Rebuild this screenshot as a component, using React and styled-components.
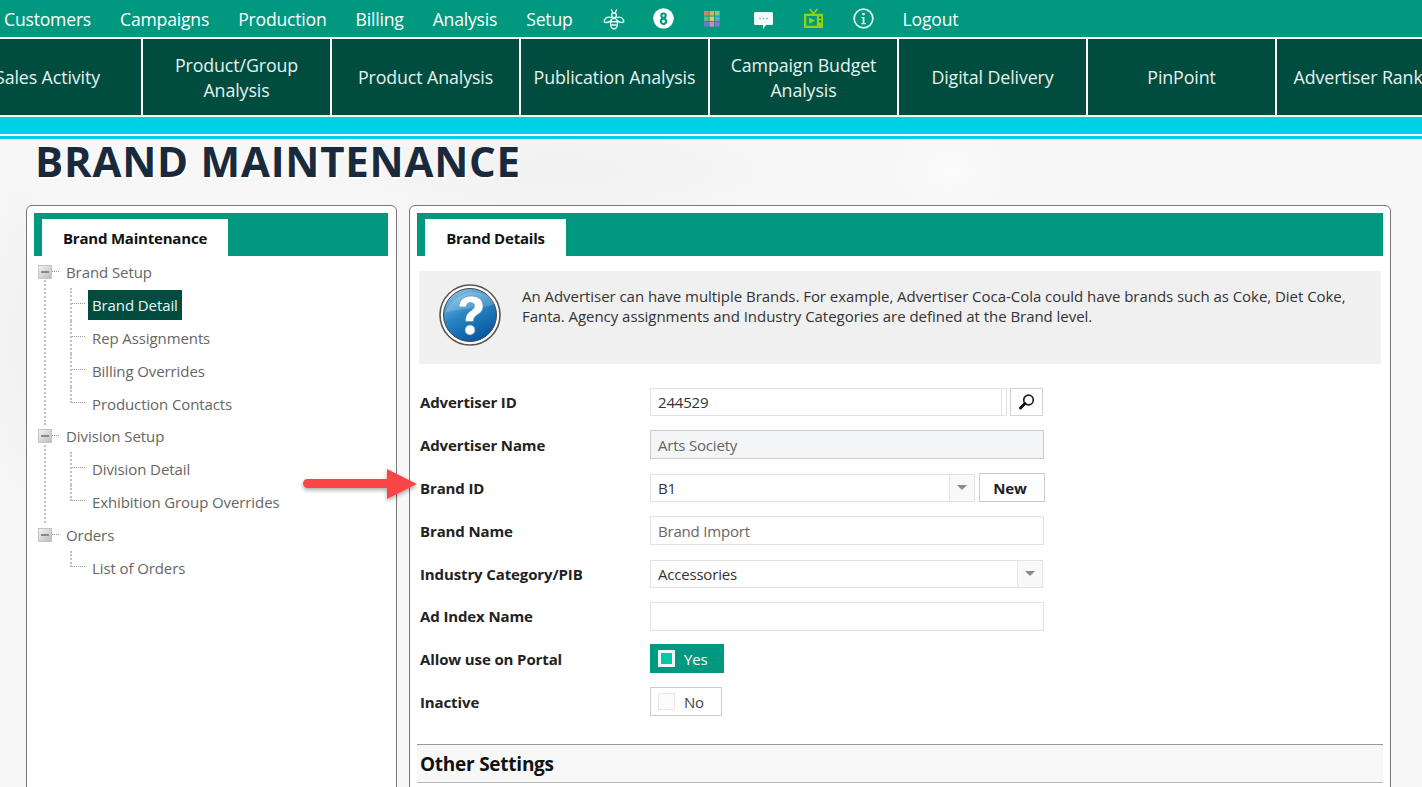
import styled, { createGlobalStyle } from "styled-components";

const GlobalStyle = createGlobalStyle`
	html, body {
		margin: 0;
		height: 100%;
		overflow: hidden;
	}
	body {
		font-family: "Open Sans", "Noto Sans", sans-serif;
		background: #f7f7f7;
	}
`;

const Page = styled.div`
	position: relative;
	height: 787px;
	overflow: hidden;
	background:
		radial-gradient(ellipse 60px 50px at 950px 170px, #fbfbfb 0, transparent 100%),
		radial-gradient(ellipse 260px 60px at 560px 170px, #f1f1f1 0, transparent 100%),
		radial-gradient(ellipse 40px 200px at 20px 340px, #f1f1f1 0, transparent 100%),
		#f7f7f7;
`;

const TopBar = styled.nav`
	display: flex;
	align-items: center;
	gap: 29px;
	height: 37px;
	padding-left: 4px;
	background: #009980;
`;

const TopLink = styled.span`
	color: #fff;
	font-size: 17.6px;
	letter-spacing: -0.2px;
	white-space: nowrap;
`;

const TopIcon = styled.svg`
	display: block;
	flex: none;
	margin-left: ${(p) => p.$ml || 0}px;
	margin-right: ${(p) => p.$mr || 0}px;
`;

const TileBar = styled.div`
	display: flex;
	height: 76px;
	margin-top: 2px;
	margin-left: -46px;
	white-space: nowrap;
`;

const Tile = styled.div`
	flex: none;
	display: flex;
	align-items: center;
	justify-content: center;
	box-sizing: border-box;
	width: 189px;
	padding: 1px 6px 0;
	border-right: 2px solid #fff;
	background: #004d40;
	color: #e8f1ef;
	font-size: 17.8px;
	line-height: 25px;
	letter-spacing: -0.1px;
	text-align: center;
	white-space: normal;
`;

const CyanStrip = styled.div`
	height: 17px;
	margin-top: 2px;
	border-bottom: 2px solid #fff;
	box-shadow: 0 3px 0 #00d0e6;
	background: #00d0e6;
`;

const Title = styled.h1`
	margin: 0 0 0 35px;
	color: #1a2a3c;
	font-size: 42px;
	font-weight: 700;
	line-height: 50px;
	letter-spacing: 0.75px;
	text-shadow: 2px 2px 1px #fff;
`;

const Columns = styled.div`
	display: flex;
	gap: 12px;
	margin: 19px 31px 0 26px;
`;

const Panel = styled.section`
	box-sizing: border-box;
	flex: ${(p) => (p.$wide ? "1" : "none")};
	width: ${(p) => (p.$wide ? "auto" : "371px")};
	height: 640px;
	padding: 7px ${(p) => (p.$wide ? "7px" : "8px")} 0 7px;
	border: 1px solid #777;
	border-radius: 6px;
	background: #fff;
`;

const TabBar = styled.div`
	display: flex;
	align-items: flex-end;
	height: 43px;
	padding-left: 8px;
	background: #009980;
`;

const Tab = styled.div`
	display: flex;
	align-items: center;
	justify-content: center;
	width: ${(p) => p.$width}px;
	height: 37px;
	background: #fff;
	color: #111;
	font-size: 15px;
	font-weight: 700;
	letter-spacing: -0.2px;
`;

const Tree = styled.div`
	margin-top: -1px;
`;

const TreeGroup = styled.div`
	position: relative;
	&::before {
		content: "";
		display: ${(p) => (p.$last ? "none" : "block")};
		position: absolute;
		left: 10px;
		top: 22px;
		height: ${(p) => p.$trunk}px;
		border-left: 2px dotted #c2c2c2;
	}
`;

const TreeHead = styled.div`
	display: flex;
	align-items: center;
	height: 33px;
	margin-top: ${(p) => (p.$flush ? "0" : "-1px")};
	padding-left: 4px;
	color: #666;
	font-size: 15px;
	letter-spacing: -0.08px;
`;

const Expander = styled.span`
	position: relative;
	display: flex;
	align-items: center;
	justify-content: center;
	box-sizing: border-box;
	width: 14px;
	height: 14px;
	margin-right: 14px;
	border: 1px solid #c4c4c4;
	background: linear-gradient(135deg, #f2f2f2, #bdbdbd);
	&::before {
		content: "";
		width: 8px;
		height: 2px;
		background: #8a8a8a;
	}
	&::after {
		content: "";
		position: absolute;
		left: 13px;
		top: 5px;
		width: 7px;
		border-top: 1px dotted #999;
	}
`;

const TreeChild = styled.div`
	position: relative;
	display: flex;
	align-items: center;
	height: 33px;
	padding-left: 54px;
	&::before {
		content: "";
		position: absolute;
		left: 36px;
		top: 0;
		height: 16px;
		border-left: 2px dotted #c2c2c2;
	}
	&:not(:last-child)::before {
		height: 33px;
	}
	&::after {
		content: "";
		position: absolute;
		left: 38px;
		top: 15px;
		width: 13px;
		border-top: 1px dotted #999;
	}
`;

const ChildText = styled.span`
	padding: 5px 4px;
	background: ${(p) => (p.$active ? "#004d40" : "transparent")};
	color: ${(p) => (p.$active ? "#f0f5f4" : "#666")};
	font-size: 15px;
	line-height: 20px;
	letter-spacing: -0.1px;
	white-space: nowrap;
`;

const InfoBox = styled.div`
	display: flex;
	align-items: flex-start;
	gap: 21px;
	box-sizing: border-box;
	height: 93px;
	margin: 15px 2px 0;
	padding: 13px 20px 0;
	background: #f0f0f0;
`;

const InfoText = styled.p`
	margin: 2px 0 0;
	color: #333;
	font-size: 15px;
	line-height: 20px;
	letter-spacing: -0.04px;
`;

const Form = styled.div`
	padding: 16px 0 0 3px;
`;

const Row = styled.div`
	display: flex;
	align-items: center;
	height: ${(p) => p.$h || 43}px;
`;

const Label = styled.label`
	flex: none;
	width: 230px;
	color: #222;
	font-size: 15px;
	font-weight: 700;
	letter-spacing: -0.12px;
`;

const Field = styled.div`
	display: flex;
	align-items: center;
	box-sizing: border-box;
	width: ${(p) => p.$width}px;
	height: ${(p) => p.$h || 28}px;
	padding-left: 7px;
	border: 1px solid ${(p) => (p.$readonly ? "#ccc" : "#e2e2e2")};
	background: ${(p) => (p.$readonly ? "#f4f5f7" : "#fff")};
	color: ${(p) => (p.$muted ? "#666" : "#333")};
	font-size: 15px;
	letter-spacing: -0.2px;
`;

const FieldValue = styled.span`
	flex: 1;
`;

const SpinEdge = styled.span`
	align-self: stretch;
	width: 4px;
	border-left: 1px solid #e2e2e2;
`;

const Caret = styled.span`
	align-self: stretch;
	display: flex;
	align-items: center;
	justify-content: center;
	width: 24px;
	border-left: 1px solid #e6e6e6;
	background: #f9f9f9;
	&::before {
		content: "";
		border-left: 5px solid transparent;
		border-right: 5px solid transparent;
		border-top: 5px solid #8a8a8a;
	}
`;

const IconButton = styled.button`
	display: flex;
	align-items: center;
	justify-content: center;
	box-sizing: border-box;
	width: 33px;
	height: 28px;
	margin-left: 3px;
	padding: 0;
	border: 1px solid #d5d5d5;
	background: #fff;
`;

const NewButton = styled.button`
	box-sizing: border-box;
	width: 66px;
	height: 29px;
	margin-left: 4px;
	padding: 0 4px 0 0;
	border: 1px solid #ccc;
	background: #fff;
	color: #222;
	font-family: inherit;
	font-size: 15px;
	font-weight: 700;
	letter-spacing: -0.2px;
`;

const Toggle = styled.div`
	display: flex;
	align-items: center;
	box-sizing: border-box;
	width: ${(p) => (p.$on ? "74px" : "72px")};
	height: 29px;
	padding-left: 7px;
	border: 1px solid ${(p) => (p.$on ? "#009980" : "#ccc")};
	background: ${(p) => (p.$on ? "#009980" : "#fff")};
	color: ${(p) => (p.$on ? "#fff" : "#444")};
	font-size: 15px;
	letter-spacing: -0.2px;
`;

const ToggleBox = styled.span`
	box-sizing: border-box;
	width: 17px;
	height: 17px;
	margin-right: 9px;
	border: ${(p) => (p.$on ? "3px solid #f4f4f4" : "1px solid #e8e8e8")};
	background: ${(p) => (p.$on ? "#00c9a7" : "#fbfbfb")};
`;

const SectionHead = styled.h2`
	box-sizing: border-box;
	height: 39px;
	margin: 21px 0 0 0;
	padding: 0 3px;
	border-top: 1px solid #999;
	border-bottom: 1px solid #bbb;
	background: #f8f8f8;
	color: #111;
	font-size: 19px;
	font-weight: 700;
	line-height: 38px;
	letter-spacing: -0.25px;
`;

const Arrow = styled.svg`
	position: absolute;
	left: 298px;
	top: 464px;
`;

const BeeIcon = () => (
	<TopIcon width="22" height="22" viewBox="0 0 24 24" fill="none" stroke="#e6f5f2" strokeWidth="1.5" $ml={1}>
		<path d="M9 1.500l2 4.500M15 1.500l-2 4.500" />
		<circle cx="12" cy="8" r="2.600" />
		<path d="M10 10.500C4 8.500 1 12 1.500 15.500c3 .8 6.500-.5 8-3M14 10.500c6-2 9 1.500 8.500 5-3 .8-6.500-.5-8-3" />
		<ellipse cx="12" cy="17" rx="3.800" ry="5.800" />
		<path d="M8.500 15h7M8.500 18.500h7" />
	</TopIcon>
);

const EightIcon = () => (
	<TopIcon width="21" height="21" viewBox="0 0 22 22" $ml={-1}>
		<circle cx="11" cy="11" r="10.800" fill="#fff" />
		<circle cx="11" cy="8" r="2.300" fill="none" stroke="#009980" strokeWidth="2.200" />
		<circle cx="11" cy="14" r="2.700" fill="none" stroke="#009980" strokeWidth="2.200" />
	</TopIcon>
);

const gridColors = [
	"#d9806f", "#e8a860", "#8cc47a",
	"#66b77a", "#e6c460", "#5aa8dc",
	"#7478c8", "#d888c2", "#9670c8",
];

const GridIcon = () => (
	<TopIcon width="16" height="16" viewBox="0 0 16 16" $ml={1} $mr={4}>
		{gridColors.map((c, i) => (
			<rect key={c} x={(i % 3) * 5.5} y={Math.floor(i / 3) * 5.5} width="4.600" height="4.600" fill={c} />
		))}
	</TopIcon>
);

const ChatIcon = () => (
	<TopIcon width="21" height="22" viewBox="0 0 21 22">
		<path d="M2.500 4h16a1.500 1.500 0 0 1 1.500 1.500v10a1.500 1.500 0 0 1-1.500 1.500H13l-3 4v-4H2.500A1.500 1.500 0 0 1 1 15.500v-10A1.500 1.500 0 0 1 2.500 4z" fill="#f2fbf9" />
		<circle cx="7" cy="10.500" r="0.800" fill="#7a9" />
		<circle cx="10.500" cy="10.500" r="0.800" fill="#7a9" />
		<circle cx="14" cy="10.500" r="0.800" fill="#7a9" />
	</TopIcon>
);

const TvIcon = () => (
	<TopIcon width="21" height="21" viewBox="0 0 22 22">
		<path d="M7 1l4 5 4-5" fill="none" stroke="#8fd40f" strokeWidth="1.600" />
		<path d="M1 6h20v15H1zM3.500 8.500v10h11v-10z" fill="#8fd40f" fillRule="evenodd" />
		<path d="M6.500 10v6.500l6-3.200z" fill="#8fd40f" />
		<rect x="17" y="9" width="2" height="2" fill="#006b5a" />
		<rect x="17" y="13" width="2" height="2" fill="#006b5a" />
	</TopIcon>
);

const InfoIcon = () => (
	<TopIcon width="21" height="21" viewBox="0 0 22 22" fill="none">
		<circle cx="11" cy="11" r="9.800" stroke="#dff3ef" strokeWidth="1.800" />
		<circle cx="11" cy="6.400" r="1.500" fill="#dff3ef" />
		<path d="M8.800 9.500h3.200v6.200h1.400v1.200H8.800v-1.200h1.300v-5H8.800z" fill="#dff3ef" />
	</TopIcon>
);

const HelpIcon = () => (
	<svg width="62" height="62" viewBox="1 1 62 62" style={{ flex: "none" }}>
		<defs>
			<linearGradient id="helpBlue" x1="0.2" y1="0" x2="0.7" y2="1">
				<stop offset="0" stopColor="#8cc6e6" />
				<stop offset="0.45" stopColor="#2a86c4" />
				<stop offset="1" stopColor="#02569f" />
			</linearGradient>
		</defs>
		<circle cx="32" cy="32" r="30" fill="#fff" stroke="#555" strokeWidth="1.600" />
		<circle cx="32" cy="32" r="26.500" fill="url(#helpBlue)" stroke="#444" strokeWidth="1" />
		<path d="M7 30C20 24 44 28 58 20 50 6 20 2 7 30z" fill="#fff" opacity="0.18" />
		<path d="M21 24c0-7 5-11 12-11 7.500 0 12 4 12 10 0 5-3 7-6 9-2.500 1.600-3.500 3-3.500 6.500h-8c0-5.500 1.500-8 5-10.500 2.500-1.800 4-3 4-5 0-2.200-1.600-3.500-4-3.500-2.700 0-4.200 1.700-4.400 4.500z" fill="#fff" stroke="#5a8fb5" strokeWidth="0.600" />
		<circle cx="32" cy="47" r="5" fill="#fff" stroke="#5a8fb5" strokeWidth="0.600" />
	</svg>
);

const LensIcon = () => (
	<svg width="18" height="18" viewBox="0 0 18 18" fill="none">
		<circle cx="10.500" cy="7" r="4.800" stroke="#222" strokeWidth="1.700" />
		<path d="M7 10.500L2.500 15" stroke="#111" strokeWidth="3" strokeLinecap="round" />
	</svg>
);

const tiles = [
	"Sales Activity",
	"Product/Group Analysis",
	"Product Analysis",
	"Publication Analysis",
	"Campaign Budget Analysis",
	"Digital Delivery",
	"PinPoint",
	"Advertiser Ranking",
];

const App = () => {
	return (
		<Page>
			<GlobalStyle />
			<TopBar>
				<TopLink>Customers</TopLink>
				<TopLink>Campaigns</TopLink>
				<TopLink>Production</TopLink>
				<TopLink>Billing</TopLink>
				<TopLink>Analysis</TopLink>
				<TopLink>Setup</TopLink>
				<BeeIcon />
				<EightIcon />
				<GridIcon />
				<ChatIcon />
				<TvIcon />
				<InfoIcon />
				<TopLink>Logout</TopLink>
			</TopBar>
			<TileBar>
				{tiles.map((t) => (
					<Tile key={t}>{t}</Tile>
				))}
			</TileBar>
			<CyanStrip />
			<Title>BRAND MAINTENANCE</Title>
			<Columns>
				<Panel>
					<TabBar>
						<Tab $width={186}>Brand Maintenance</Tab>
					</TabBar>
					<Tree>
						<TreeGroup $trunk={148}>
							<TreeHead $flush>
								<Expander />
								Brand Setup
							</TreeHead>
							<TreeChild><ChildText $active>Brand Detail</ChildText></TreeChild>
							<TreeChild><ChildText>Rep Assignments</ChildText></TreeChild>
							<TreeChild><ChildText>Billing Overrides</ChildText></TreeChild>
							<TreeChild><ChildText>Production Contacts</ChildText></TreeChild>
						</TreeGroup>
						<TreeGroup $trunk={82}>
							<TreeHead>
								<Expander />
								Division Setup
							</TreeHead>
							<TreeChild><ChildText>Division Detail</ChildText></TreeChild>
							<TreeChild><ChildText>Exhibition Group Overrides</ChildText></TreeChild>
						</TreeGroup>
						<TreeGroup $last>
							<TreeHead $flush>
								<Expander />
								Orders
							</TreeHead>
							<TreeChild><ChildText>List of Orders</ChildText></TreeChild>
						</TreeGroup>
					</Tree>
				</Panel>
				<Panel $wide>
					<TabBar>
						<Tab $width={141}>Brand Details</Tab>
					</TabBar>
					<InfoBox>
						<HelpIcon />
						<InfoText>
							An Advertiser can have multiple Brands. For example, Advertiser Coca-Cola could have brands such as Coke, Diet Coke, Fanta. Agency assignments and Industry Categories are defined at the Brand level.
						</InfoText>
					</InfoBox>
					<Form>
						<Row>
							<Label>Advertiser ID</Label>
							<Field $width={357}><FieldValue>244529</FieldValue><SpinEdge /></Field>
							<IconButton><LensIcon /></IconButton>
						</Row>
						<Row>
							<Label>Advertiser Name</Label>
							<Field $width={394} $h={29} $readonly $muted>Arts Society</Field>
						</Row>
						<Row>
							<Label>Brand ID</Label>
							<Field $width={325}><FieldValue>B1</FieldValue><Caret /></Field>
							<NewButton>New</NewButton>
						</Row>
						<Row>
							<Label>Brand Name</Label>
							<Field $width={394} $h={29} $muted>Brand Import</Field>
						</Row>
						<Row>
							<Label>Industry Category/PIB</Label>
							<Field $width={393}><FieldValue>Accessories</FieldValue><Caret /></Field>
						</Row>
						<Row $h={42}>
							<Label>Ad Index Name</Label>
							<Field $width={394} $h={29} />
						</Row>
						<Row>
							<Label>Allow use on Portal</Label>
							<Toggle $on><ToggleBox $on />Yes</Toggle>
						</Row>
						<Row>
							<Label>Inactive</Label>
							<Toggle><ToggleBox />No</Toggle>
						</Row>
					</Form>
					<SectionHead>Other Settings</SectionHead>
				</Panel>
			</Columns>
			<Arrow width="124" height="40" viewBox="0 0 124 40">
				<defs>
					<filter id="arrowShadow" x="-10%" y="-30%" width="120%" height="170%">
						<feDropShadow dx="0" dy="2" stdDeviation="2" floodColor="#000" floodOpacity="0.35" />
					</filter>
				</defs>
				<path d="M9.500 15H89V5l30 15L89 35V24H9.500a4.500 4.500 0 0 1 0-9z" fill="#f94444" filter="url(#arrowShadow)" />
			</Arrow>
		</Page>
	);
};

export default App;
